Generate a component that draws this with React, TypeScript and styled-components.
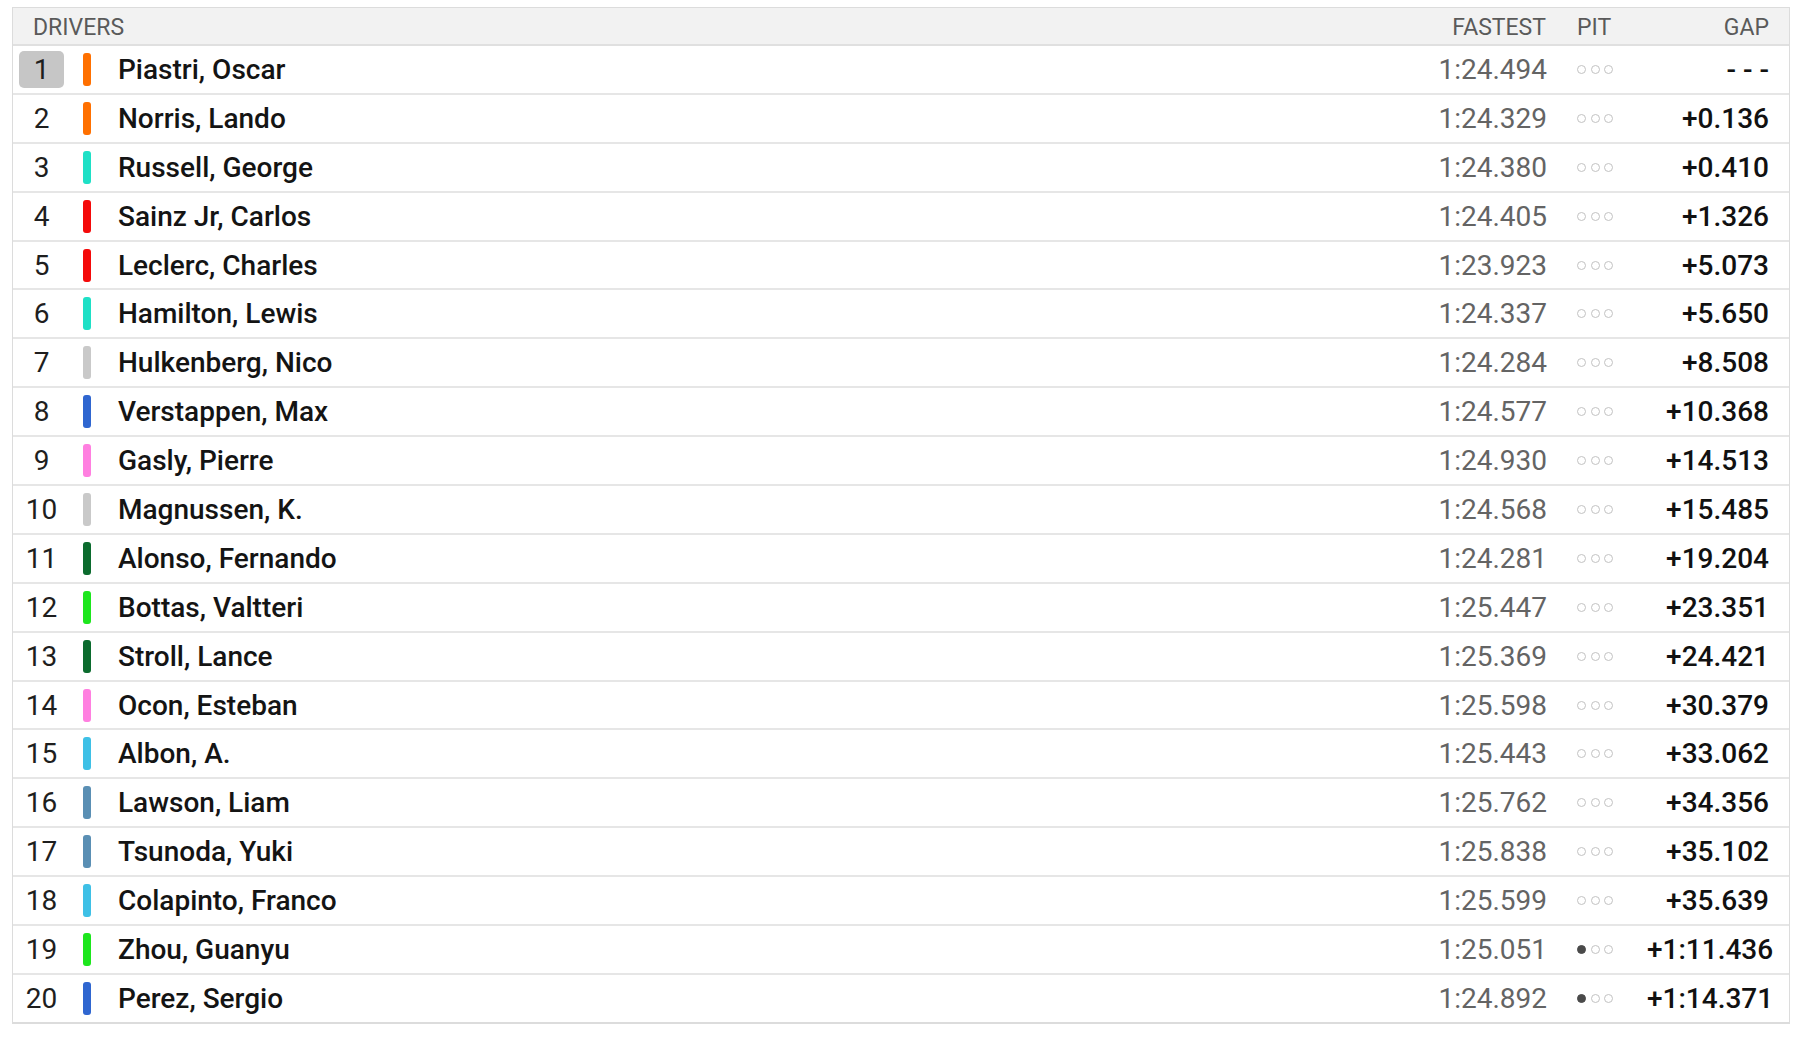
import React from "react";
import styled, { createGlobalStyle } from "styled-components";

const Global = createGlobalStyle`
  html, body { margin: 0; padding: 0; background: #ffffff; }
  body { font-family: Roboto, "Liberation Sans", Arial, sans-serif; }
`;

const Page = styled.div`
  padding: 7px 10px 0 12px;
`;

const Table = styled.div`
  border: 1px solid #dcdcdc;
  border-bottom-width: 2px;
  background: #ffffff;
`;

const cols = "64px 41px 1fr 160px 70px 122px";

const HeaderRow = styled.div`
  display: grid;
  grid-template-columns: ${cols};
  align-items: center;
  height: 36px;
  padding-right: 20px;
  background: #f2f2f2;
  border-bottom: 2px solid #e0e0e0;
  font-size: 23px;
  color: #5a5a5a;
`;

const HeadCell = styled.div<{ $align?: "left" | "right"; $span?: number; $padL?: number; $padR?: number }>`
  grid-column: span ${(p) => p.$span ?? 1};
  text-align: ${(p) => p.$align ?? "left"};
  padding-left: ${(p) => p.$padL ?? 0}px;
  padding-right: ${(p) => p.$padR ?? 0}px;
  padding-top: 2px;
`;

const Row = styled.div`
  display: grid;
  grid-template-columns: ${cols};
  align-items: center;
  height: 48.9px;
  box-sizing: border-box;
  padding-right: 20px;
  border-bottom: 2px solid #e6e6e6;
  &:last-child { border-bottom: none; height: 46.9px; }
`;

const PosCell = styled.div`
  padding-left: 6px;
`;

const PosBadge = styled.div<{ $leader?: boolean }>`
  width: 45px;
  height: 37px;
  border-radius: 5px;
  background: ${(p) => (p.$leader ? "#c6c6c6" : "transparent")};
  display: flex;
  align-items: center;
  justify-content: center;
  font-size: 28px;
  color: #1e1e1e;
`;

const BarCell = styled.div`
  padding-left: 6px;
  display: flex;
  align-items: center;
`;

const TeamBar = styled.div<{ $color: string }>`
  width: 8px;
  height: 33px;
  border-radius: 3px;
  background: ${(p) => p.$color};
`;

const Name = styled.div`
  font-size: 28px;
  font-weight: 500;
  color: #141414;
  white-space: nowrap;
`;

const Fastest = styled.div`
  text-align: right;
  padding-right: 30px;
  font-size: 28px;
  color: #646464;
`;

const Pit = styled.div`
  display: flex;
  gap: 4.5px;
  align-items: center;
`;

const Dot = styled.span<{ $filled?: boolean }>`
  width: 9px;
  height: 9px;
  box-sizing: border-box;
  border-radius: 50%;
  border: 1.6px solid ${(p) => (p.$filled ? "#4a4a4a" : "#c2c2c2")};
  background: ${(p) => (p.$filled ? "#4a4a4a" : "transparent")};
`;

const Gap = styled.div`
  text-align: right;
  font-size: 28px;
  font-weight: 500;
  color: #111111;
  white-space: nowrap;
`;

const C = {
  mclaren: "#ff7000",
  mercedes: "#1ee0c6",
  ferrari: "#f40a0a",
  haas: "#c9c9c9",
  redbull: "#2f66d0",
  alpine: "#ff7fe0",
  aston: "#0b6b2e",
  sauber: "#1de61d",
  williams: "#3ec0e6",
  rb: "#5a8fb4",
};

type D = { name: string; color: string; fastest: string; pits: number; gap: string };

const drivers: D[] = [
  { name: "Piastri, Oscar", color: C.mclaren, fastest: "1:24.494", pits: 0, gap: "- - -" },
  { name: "Norris, Lando", color: C.mclaren, fastest: "1:24.329", pits: 0, gap: "+0.136" },
  { name: "Russell, George", color: C.mercedes, fastest: "1:24.380", pits: 0, gap: "+0.410" },
  { name: "Sainz Jr, Carlos", color: C.ferrari, fastest: "1:24.405", pits: 0, gap: "+1.326" },
  { name: "Leclerc, Charles", color: C.ferrari, fastest: "1:23.923", pits: 0, gap: "+5.073" },
  { name: "Hamilton, Lewis", color: C.mercedes, fastest: "1:24.337", pits: 0, gap: "+5.650" },
  { name: "Hulkenberg, Nico", color: C.haas, fastest: "1:24.284", pits: 0, gap: "+8.508" },
  { name: "Verstappen, Max", color: C.redbull, fastest: "1:24.577", pits: 0, gap: "+10.368" },
  { name: "Gasly, Pierre", color: C.alpine, fastest: "1:24.930", pits: 0, gap: "+14.513" },
  { name: "Magnussen, K.", color: C.haas, fastest: "1:24.568", pits: 0, gap: "+15.485" },
  { name: "Alonso, Fernando", color: C.aston, fastest: "1:24.281", pits: 0, gap: "+19.204" },
  { name: "Bottas, Valtteri", color: C.sauber, fastest: "1:25.447", pits: 0, gap: "+23.351" },
  { name: "Stroll, Lance", color: C.aston, fastest: "1:25.369", pits: 0, gap: "+24.421" },
  { name: "Ocon, Esteban", color: C.alpine, fastest: "1:25.598", pits: 0, gap: "+30.379" },
  { name: "Albon, A.", color: C.williams, fastest: "1:25.443", pits: 0, gap: "+33.062" },
  { name: "Lawson, Liam", color: C.rb, fastest: "1:25.762", pits: 0, gap: "+34.356" },
  { name: "Tsunoda, Yuki", color: C.rb, fastest: "1:25.838", pits: 0, gap: "+35.102" },
  { name: "Colapinto, Franco", color: C.williams, fastest: "1:25.599", pits: 0, gap: "+35.639" },
  { name: "Zhou, Guanyu", color: C.sauber, fastest: "1:25.051", pits: 1, gap: "+1:11.436" },
  { name: "Perez, Sergio", color: C.redbull, fastest: "1:24.892", pits: 1, gap: "+1:14.371" },
];

export default function App() {
  return (
    <Page>
      <Global />
      <Table>
        <HeaderRow>
          <HeadCell $span={3} $padL={20}>DRIVERS</HeadCell>
          <HeadCell $align="right" $padR={31}>FASTEST</HeadCell>
          <HeadCell>PIT</HeadCell>
          <HeadCell $align="right">GAP</HeadCell>
        </HeaderRow>
        {drivers.map((d, i) => (
          <Row key={d.name}>
            <PosCell>
              <PosBadge $leader={i === 0}>{i + 1}</PosBadge>
            </PosCell>
            <BarCell>
              <TeamBar $color={d.color} />
            </BarCell>
            <Name>{d.name}</Name>
            <Fastest>{d.fastest}</Fastest>
            <Pit>
              {[0, 1, 2].map((k) => (
                <Dot key={k} $filled={k < d.pits} />
              ))}
            </Pit>
            <Gap>{d.gap}</Gap>
          </Row>
        ))}
      </Table>
    </Page>
  );
}
